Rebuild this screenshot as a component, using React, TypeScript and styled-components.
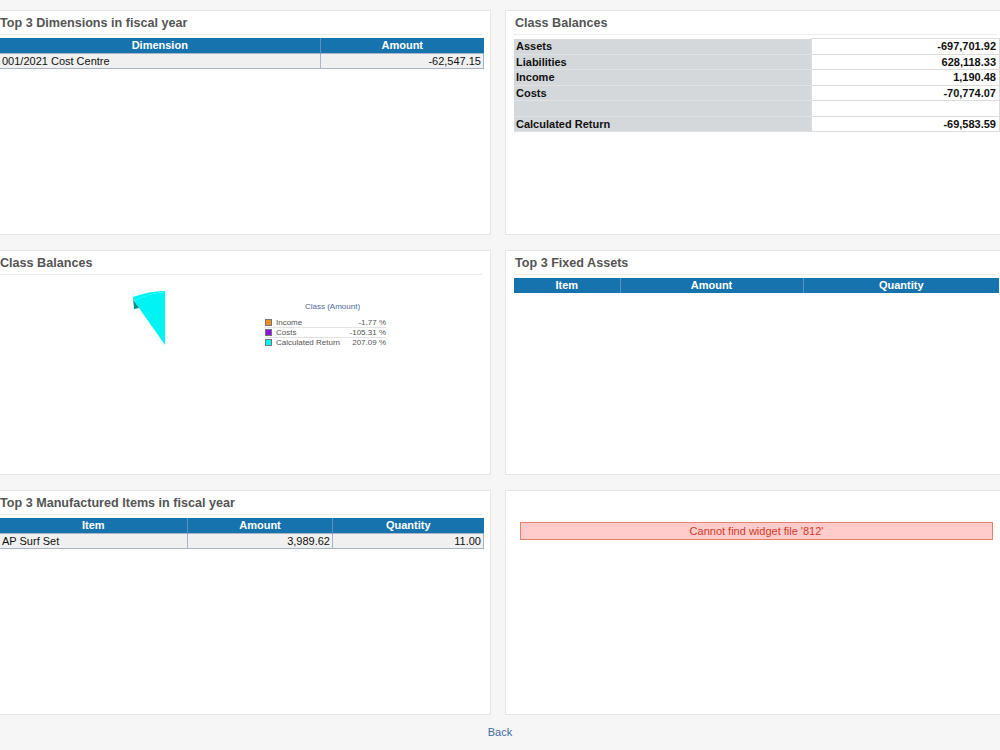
import styled, { createGlobalStyle } from 'styled-components';

const Global = createGlobalStyle`
  html, body {
    margin: 0;
    padding: 0;
    background: #f6f6f6;
    font-family: 'Liberation Sans', Arial, sans-serif;
    overflow: hidden;
  }
`;

type Col = { label: string; width: number };

const dimensionCols: Col[] = [
  { label: 'Dimension', width: 321 },
  { label: 'Amount', width: 163 },
];

const assetCols: Col[] = [
  { label: 'Item', width: 106 },
  { label: 'Amount', width: 183 },
  { label: 'Quantity', width: 196 },
];

const manufacturedCols: Col[] = [
  { label: 'Item', width: 188 },
  { label: 'Amount', width: 145 },
  { label: 'Quantity', width: 151 },
];

const balances = [
  { label: 'Assets', value: '-697,701.92' },
  { label: 'Liabilities', value: '628,118.33' },
  { label: 'Income', value: '1,190.48' },
  { label: 'Costs', value: '-70,774.07' },
  { label: '', value: '' },
  { label: 'Calculated Return', value: '-69,583.59' },
];

const legend = [
  { label: 'Income', value: '-1.77 %', color: '#e8901c' },
  { label: 'Costs', value: '-105.31 %', color: '#8a12e6' },
  { label: 'Calculated Return', value: '207.09 %', color: '#00f6f6' },
];

function DataTable({ cols, rows }: { cols: Col[]; rows: string[][] }) {
  const total = cols.reduce((s, c) => s + c.width, 0);
  return (
    <Table style={{ width: total }}>
      <colgroup>
        {cols.map((c) => (
          <col key={c.label} style={{ width: c.width }} />
        ))}
      </colgroup>
      <thead>
        <tr>
          {cols.map((c) => (
            <Th key={c.label}>{c.label}</Th>
          ))}
        </tr>
      </thead>
      <tbody>
        {rows.map((r, i) => (
          <tr key={i}>
            {r.map((cell, j) => (
              <Td key={j} right={j > 0}>
                {cell}
              </Td>
            ))}
          </tr>
        ))}
      </tbody>
    </Table>
  );
}

function PieChart() {
  return (
    <ChartArea>
      <svg width="480" height="100" viewBox="0 0 480 100">
        <path d="M135 23 Q150 15 166 14 L166 67 L140 30 Z" fill="#00f4f4" />
        <path d="M134 19 L135 23 L140 30 L135 31 Z" fill="#0a8a8a" />
        <path d="M134 19 Q150 13 166 13 L166 14 Q150 15 135 23 Z" fill="#00f4f4" />
      </svg>
      <Legend>
        <LegendTitle>Class (Amount)</LegendTitle>
        {legend.map((l) => (
          <LegendRow key={l.label}>
            <Swatch color={l.color} />
            <LegendLabel>{l.label}</LegendLabel>
            <LegendValue>{l.value}</LegendValue>
          </LegendRow>
        ))}
      </Legend>
    </ChartArea>
  );
}

export default function App() {
  return (
    <>
      <Global />
      <Page>
        <Grid>
          <Panel>
            <Title>Top 3 Dimensions in fiscal year</Title>
            <DataTable cols={dimensionCols} rows={[['001/2021 Cost Centre', '-62,547.15']]} />
          </Panel>
          <Panel>
            <Title>Class Balances</Title>
            <BalanceTable>
              <tbody>
                {balances.map((b, i) => (
                  <tr key={i}>
                    <BalanceLabel>{b.label}</BalanceLabel>
                    <BalanceValue>{b.value}</BalanceValue>
                  </tr>
                ))}
              </tbody>
            </BalanceTable>
          </Panel>
          <Panel>
            <Title>Class Balances</Title>
            <PieChart />
          </Panel>
          <Panel>
            <Title>Top 3 Fixed Assets</Title>
            <DataTable cols={assetCols} rows={[]} />
          </Panel>
          <Panel>
            <Title>Top 3 Manufactured Items in fiscal year</Title>
            <DataTable cols={manufacturedCols} rows={[['AP Surf Set', '3,989.62', '11.00']]} />
          </Panel>
          <Panel>
            <ErrorBox>Cannot find widget file '812'</ErrorBox>
          </Panel>
        </Grid>
        <Footer>
          <BackLink href="#">Back</BackLink>
        </Footer>
      </Page>
    </>
  );
}

const Page = styled.div`
  width: 1000px;
  height: 750px;
  overflow: hidden;
  background: #f6f6f6;
`;

const Grid = styled.div`
  display: grid;
  grid-template-columns: 501px 501px;
  grid-auto-rows: 225px;
  column-gap: 14px;
  row-gap: 15px;
  margin-left: -10px;
  padding-top: 10px;
`;

const Panel = styled.div`
  background: #fff;
  border: 1px solid #e6e6e6;
  box-sizing: border-box;
  padding: 0 8px;
  overflow: hidden;
`;

const Title = styled.h3`
  margin: 0 0 3px;
  padding: 4px 1px 0;
  height: 19px;
  font-size: 12.6px;
  font-weight: bold;
  color: #555;
  border-bottom: 1px solid #ececec;
  line-height: 16px;
`;

const Table = styled.table`
  border-collapse: collapse;
  table-layout: fixed;
  font-size: 11px;
`;

const Th = styled.th`
  background: #1773ae;
  color: #fff;
  font-weight: bold;
  height: 15px;
  padding: 0 2px;
  line-height: 15px;
  border: 1px solid #5b93bd;
  border-top: none;
  border-bottom: none;
  &:first-child { border-left: none; }
  &:last-child { border-right: none; }
`;

const Td = styled.td<{ right?: boolean }>`
  background: #f0f0f0;
  color: #111;
  height: 14px;
  line-height: 14px;
  padding: 0 2px;
  text-align: ${(p) => (p.right ? 'right' : 'left')};
  border: 1px solid #a9b4c6;
  white-space: nowrap;
`;

const BalanceTable = styled.table`
  border-collapse: collapse;
  table-layout: fixed;
  width: 486px;
  font-size: 11px;
  font-weight: bold;
  color: #111;
`;

const BalanceLabel = styled.td`
  width: 293px;
  background: #d5d8da;
  height: 14.5px;
  line-height: 14.5px;
  padding: 0 2px;
  border-bottom: 1px solid #dfe1e2;
`;

const BalanceValue = styled.td`
  background: #fff;
  height: 14.5px;
  line-height: 14.5px;
  padding: 0 3px;
  text-align: right;
  border: 1px solid #dcdcdc;
`;

const ChartArea = styled.div`
  position: relative;
  height: 110px;
`;

const Legend = styled.div`
  position: absolute;
  left: 266px;
  top: 24px;
  width: 121px;
  font-size: 8px;
  color: #555;
`;

const LegendTitle = styled.div`
  text-align: center;
  color: #4d6a9e;
  margin-bottom: 7px;
  padding-left: 14px;
`;

const LegendRow = styled.div`
  display: flex;
  align-items: center;
  height: 9px;
  border-bottom: 1px solid #e4e4e4;
  &:last-child { border-bottom: none; }
`;

const Swatch = styled.span<{ color: string }>`
  width: 7px;
  height: 7px;
  background: ${(p) => p.color};
  border: 1px solid #777;
  box-sizing: border-box;
  margin-right: 4px;
`;

const LegendLabel = styled.span`
  flex: 1;
`;

const LegendValue = styled.span`
  text-align: right;
`;

const ErrorBox = styled.div`
  margin: 31px 4px 0 6px;
  background: #ffcbcb;
  border: 1px solid #e5806c;
  color: #d23b2b;
  font-size: 11px;
  text-align: center;
  height: 16px;
  line-height: 16px;
`;

const Footer = styled.div`
  text-align: center;
  padding-top: 11px;
  font-size: 11px;
`;

const BackLink = styled.a`
  color: #3d6ba8;
  text-decoration: none;
`;
